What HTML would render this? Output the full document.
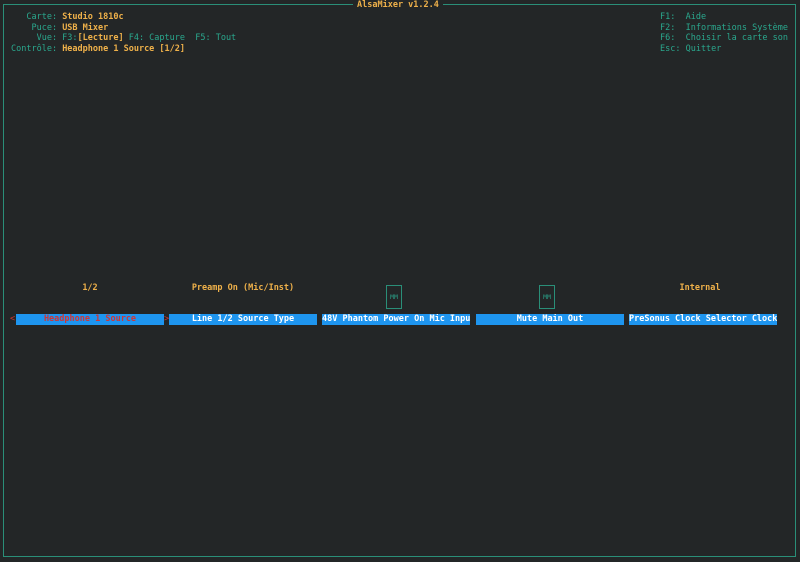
<!DOCTYPE html>
<html><head><meta charset="utf-8"><style>
body{margin:0;width:800px;height:562px;background:#232627;overflow:hidden;position:relative;font-family:"DejaVu Sans Mono","Liberation Mono",monospace;font-size:8.5px;line-height:10.7px}
.box{position:absolute;left:3px;top:4px;width:791px;height:551px;border:1px solid #2a8e78}
.t{position:absolute;white-space:pre}
.g{color:#2aa88e}
.o{color:#efb14a;font-weight:bold}
.bar{position:absolute;top:314px;height:11px;background:#1e95ef;color:#fff;font-weight:bold;text-align:center;line-height:11px;white-space:pre;overflow:hidden}
.mm{position:absolute;top:285px;width:14px;height:22px;border:1px solid #2a8e78;color:#2a9e86;font-size:6.5px;text-align:center;line-height:22px}
.lab{position:absolute;top:283px;color:#efb14a;font-weight:bold;text-align:center;width:148px;white-space:pre}
</style></head><body>
<div class="box"></div>
<div class="t o" style="left:353px;top:0;background:#232627;padding:0 4px">AlsaMixer v1.2.4</div>
<div class="t" style="left:11px;top:12px"><span class="g">   Carte: </span><span class="o">Studio 1810c</span>
<span class="g">    Puce: </span><span class="o">USB Mixer</span>
<span class="g">     Vue: F3:</span><span class="o">[Lecture]</span><span class="g"> F4: Capture  F5: Tout</span>
<span class="g">Contrôle: </span><span class="o">Headphone 1 Source [1/2]</span></div>
<div class="t g" style="left:660px;top:12px">F1:  Aide
F2:  Informations Système
F6:  Choisir la carte son
Esc: Quitter</div>
<div class="lab" style="left:16px">1/2</div>
<div class="lab" style="left:169px">Preamp On (Mic/Inst)</div>
<div class="lab" style="left:626px">Internal</div>
<div class="mm" style="left:386px">MM</div>
<div class="mm" style="left:539px">MM</div>
<div class="t" style="left:10px;top:314px;color:#d03535;line-height:11px">&lt;</div>
<div class="t" style="left:164px;top:314px;color:#d03535;line-height:11px">&gt;</div>
<div class="bar" style="left:16px;width:148px;color:#d03535">Headphone 1 Source</div>
<div class="bar" style="left:169px;width:148px">Line 1/2 Source Type</div>
<div class="bar" style="left:322px;width:148px;text-align:left">48V Phantom Power On Mic Inpu</div>
<div class="bar" style="left:476px;width:148px">Mute Main Out</div>
<div class="bar" style="left:629px;width:148px;text-align:left">PreSonus Clock Selector Clock</div>
</body></html>
